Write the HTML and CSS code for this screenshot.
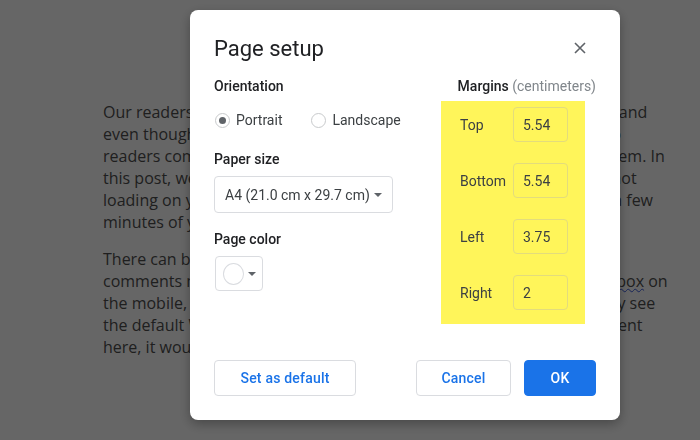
FILE: index.html
```
<!DOCTYPE html>
<html lang="en">

<head>
  <meta charset="UTF-8">
  <meta name="viewport" content="width=device-width, initial-scale=1.0">
  <title>Page setup</title>
  <link rel="stylesheet" href="styles.css">
</head>

<body>
  <!-- article behind the dialog -->
  <div class="article">
    <p>
      Our readers often leave their comments on our posts and on articles and<br>
      even though this comment system generally works well, we still get to<br>
      readers complaining that all Disqus comments are not showing for them. In<br>
      this post, we will show you what you can do if Disqus comments are not<br>
      loading on your website or a blog. It will not take you more than just a few<br>
      minutes of your time.
    </p>
    <p>
      There can be many reasons why Disqus comments are not loading.<br>
      comments may not be visible. If you do not see the Disqus comment <span class="typo">box</span> on<br>
      the mobile, then scroll down to the end of the post page, and you may see<br>
      the default WordPress comment form. If you find a WordPress comment<br>
      here, it would mean that Disqus did not load.
    </p>
  </div>

  <div class="overlay">
    <div class="dialog">
      <div class="dialog-head">
        <h1>Page setup</h1>
        <span class="close-btn">
          <svg width="12" height="12" viewBox="0 0 12 12">
            <path d="M1 1L11 11M11 1L1 11" stroke="#5f6368" stroke-width="1.6" fill="none" />
          </svg>
        </span>
      </div>

      <div class="dialog-body">
        <div class="left-col">
          <div class="label">Orientation</div>
          <div class="radio-group">
            <label class="radio"><span class="dot checked"></span>Portrait</label>
            <label class="radio"><span class="dot"></span>Landscape</label>
          </div>

          <div class="label">Paper size</div>
          <div class="select">
            A4 (21.0 cm x 29.7 cm)
            <span class="caret"></span>
          </div>

          <div class="label">Page color</div>
          <div class="swatch">
            <span class="circle"></span>
            <span class="caret"></span>
          </div>
        </div>

        <div class="right-col">
          <div class="label margins-title">Margins <span class="unit">(centimeters)</span></div>
          <div class="margins">
            <div class="margin-row"><span>Top</span><div class="field">5.54</div></div>
            <div class="margin-row"><span>Bottom</span><div class="field">5.54</div></div>
            <div class="margin-row"><span>Left</span><div class="field">3.75</div></div>
            <div class="margin-row"><span>Right</span><div class="field">2</div></div>
          </div>
        </div>
      </div>

      <div class="dialog-foot">
        <button class="btn">Set as default</button>
        <div class="actions">
          <button class="btn cancel">Cancel</button>
          <button class="btn primary">OK</button>
        </div>
      </div>
    </div>
  </div>
</body>

</html>
```

FILE: styles.css
```
* {
  box-sizing: border-box;
}

body {
  margin: 0;
  width: 700px;
  height: 440px;
  overflow: hidden;
  background: #fff;
}

/* 背景文章 */
.article {
  padding: 101px 0 0 103px;
  font-family: "Open Sans", sans-serif;
  font-size: 16px;
  line-height: 22px;
  color: #4f4f4f;
  white-space: nowrap;
}

.article p {
  margin: 0 0 15px;
}

.typo {
  text-decoration: underline wavy #3b5bdb;
  text-decoration-thickness: 1px;
}

.overlay {
  position: fixed;
  top: 0;
  left: 0;
  right: 0;
  bottom: 0;
  background: rgba(0, 0, 0, 0.6);
}

/* 对话框 */
.dialog {
  position: absolute;
  left: 190px;
  top: 10px;
  width: 430px;
  height: 410px;
  background: white;
  border-radius: 8px;
  padding: 24px;
  display: flex;
  flex-direction: column;
  font-family: Roboto, "Liberation Sans", sans-serif;
  color: #3c4043;
  box-shadow: 0 4px 12px rgba(0, 0, 0, 0.3);
}

.dialog-head {
  display: flex;
  align-items: center;
  justify-content: space-between;
  height: 28px;
}

.dialog-head h1 {
  margin: 0;
  font-size: 22px;
  font-weight: 400;
  color: #202124;
}

.close-btn {
  display: flex;
  margin-right: 10px;
}

.dialog-body {
  display: flex;
  justify-content: space-between;
  margin-top: 16px;
  flex: 1;
}

.label {
  font-size: 14px;
  font-weight: 500;
  color: #202124;
  line-height: 16px;
}

.left-col {
  display: flex;
  flex-direction: column;
}

.radio-group {
  display: flex;
  gap: 29px;
  margin: 18px 0 23px 1px;
}

.radio {
  display: flex;
  align-items: center;
  gap: 6px;
  font-size: 14px;
  color: #3c4043;
  line-height: 16px;
}

.dot {
  width: 15px;
  height: 15px;
  border: 1px solid #c8cacc;
  border-radius: 50%;
  display: flex;
  align-items: center;
  justify-content: center;
}

.dot.checked::after {
  content: "";
  width: 7px;
  height: 7px;
  border-radius: 50%;
  background: #5f6368;
}

.select {
  margin-top: 9px;
  width: 179px;
  height: 37px;
  border: 1px solid #dadce0;
  border-radius: 4px;
  padding: 0 10px;
  display: flex;
  align-items: center;
  justify-content: space-between;
  font-size: 14px;
  color: #3c4043;
  margin-bottom: 18px;
}

.caret {
  width: 0;
  height: 0;
  border-left: 4px solid transparent;
  border-right: 4px solid transparent;
  border-top: 4px solid #5f6368;
}

.swatch {
  margin-top: 9px;
  margin-left: 1px;
  width: 48px;
  height: 35px;
  border: 1px solid #dadce0;
  border-radius: 4px;
  display: flex;
  align-items: center;
  padding: 0 6px 0 7px;
  gap: 4px;
}

.swatch .circle {
  width: 22px;
  height: 22px;
  border: 1px solid #dadce0;
  border-radius: 50%;
}

.right-col {
  display: flex;
  flex-direction: column;
  align-items: flex-end;
}

.unit {
  font-weight: 400;
  color: #80868b;
}

.margins {
  margin-top: 7px;
  margin-right: 11px;
  width: 144px;
  background: #fff55a;
  padding: 6px 17px 14px 19px;
  display: flex;
  flex-direction: column;
  gap: 21px;
}

.margin-row {
  display: flex;
  align-items: center;
  justify-content: space-between;
  font-size: 14px;
  color: #3c4043;
}

.field {
  width: 55px;
  height: 35px;
  border: 1px solid #e3dc7c;
  border-radius: 4px;
  display: flex;
  align-items: center;
  padding-left: 9px;
  font-size: 14px;
  color: #3c4043;
}

/* 底部按钮 */
.dialog-foot {
  display: flex;
  justify-content: space-between;
  align-items: center;
}

.actions {
  display: flex;
  gap: 13px;
}

.btn {
  height: 36px;
  padding: 0;
  width: 142px;
  border: 1px solid #dadce0;
  border-radius: 4px;
  background: white;
  color: #1a73e8;
  font-family: Roboto, "Liberation Sans", sans-serif;
  font-size: 14px;
  font-weight: 500;
  letter-spacing: 0.2px;
}

.btn.cancel {
  width: 95px;
}

.btn.primary {
  width: 72px;
  background: #1a73e8;
  border-color: #1a73e8;
  color: white;
}
```
